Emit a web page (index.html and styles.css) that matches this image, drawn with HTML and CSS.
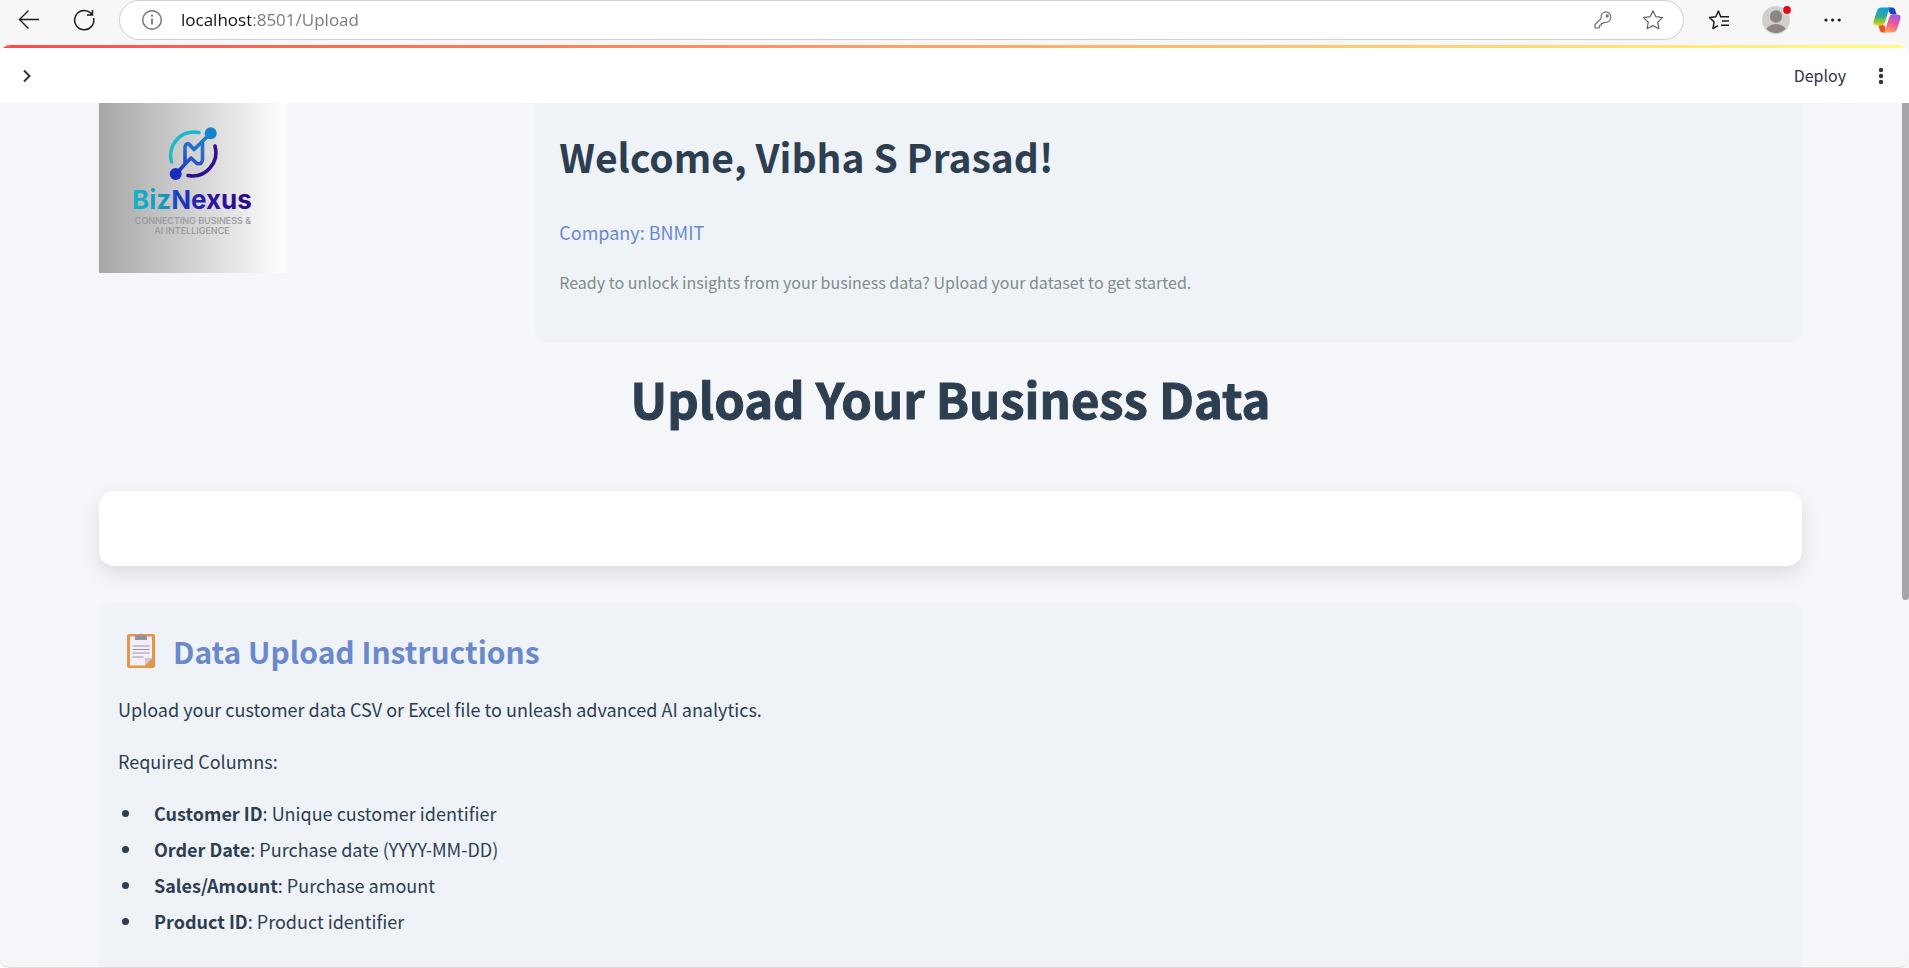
FILE: index.html
```html
<!DOCTYPE html>
<html lang="en">
<head>
<meta charset="utf-8">
<title>Upload</title>
<link rel="stylesheet" href="styles.css">
</head>
<body>
<div class="toolbar">
  <button class="nav-btn" aria-label="Back"><svg width="24" height="24" viewBox="0 0 24 24" fill="none" stroke="#1b1b1b" stroke-width="1.4"><path d="M22 11.500H2.500M11.500 2.500l-9 9 9 9"/></svg></button>
  <button class="nav-btn" aria-label="Reload"><svg width="24" height="24" viewBox="0 0 24 24" fill="none" stroke="#1b1b1b" stroke-width="1.500"><path d="M21.600 10A9.600 9.600 0 1 1 18.500 4.900L20.500 6.800M20.500 2v5h-5.500"/></svg></button>
  <form class="address">
    <svg width="22" height="22" viewBox="0 0 22 22" fill="none" stroke="#717171" stroke-width="1.400"><circle cx="11" cy="11" r="9.300"/><path d="M11 9.500v6" stroke-width="1.700"/><circle cx="11" cy="6.700" r="1.100" fill="#717171" stroke="none"/></svg>
    <input class="address-input" type="text" aria-label="Address" value="localhost:8501/Upload">
    <button type="button" class="plain-btn" aria-label="Passwords"><svg width="20" height="20" viewBox="0 0 20 20" fill="none" stroke="#666" stroke-width="1.100" stroke-linejoin="round"><path d="M12.400 1.700a5.400 5.400 0 1 1-1.400 10.600l-1.200 1.200H8.300v1.700H6.600v1.900l-1 .9H2v-3.500l6.200-6.200A5.400 5.400 0 0 1 12.400 1.700z"/><circle cx="14.200" cy="5.900" r="1"/></svg></button>
    <button type="button" class="plain-btn" aria-label="Add to favorites"><svg width="22" height="22" viewBox="0 0 22 22" fill="none" stroke="#666" stroke-width="1.200" stroke-linejoin="round"><path d="M11 1.700l2.900 6 6.600.9-4.800 4.600 1.200 6.500L11 16.600l-5.900 3.100 1.200-6.500L1.500 8.600l6.600-.9z"/></svg></button>
  </form>
  <div class="actions">
    <button class="action" aria-label="Favorites"><svg width="22" height="22" viewBox="0 0 22 22" fill="none" stroke="#1b1b1b" stroke-width="1.500" stroke-linejoin="round"><path d="M12 7.700h9M12.800 7.700L10.400 2 7.800 7.700 1.500 8.500l4.600 4.400L5 19.500l5-2.800M14 12h7M13 16.300h8"/></svg></button>
    <button class="action" aria-label="Profile"><svg width="32" height="32" viewBox="0 0 32 32"><defs><clipPath id="face"><circle cx="17" cy="16" r="13"/></clipPath></defs><circle cx="17" cy="16" r="14" fill="#d2d0ce"/><g fill="#8b8785"><circle cx="17" cy="12.500" r="6.200"/><ellipse cx="17" cy="28" rx="10.500" ry="8" clip-path="url(#face)"/></g><circle cx="28" cy="6" r="4.800" fill="#f7f7f7"/><circle cx="28" cy="6" r="3.900" fill="#e00b1c"/></svg></button>
    <button class="action" aria-label="Settings and more"><svg width="22" height="22" viewBox="0 0 22 22" fill="#1b1b1b"><circle cx="6" cy="11" r="1.600"/><circle cx="12.600" cy="11" r="1.600"/><circle cx="19.200" cy="11" r="1.600"/></svg></button>
    <button class="action" aria-label="Copilot"><svg width="28" height="28" viewBox="0 0 28 28"><defs><linearGradient id="cpA" x1="0" y1="0" x2="0" y2="1"><stop offset="0" stop-color="#1496f0"/><stop offset=".5" stop-color="#2fb08a"/><stop offset="1" stop-color="#f2d500"/></linearGradient><linearGradient id="cpB" x1=".7" y1="0" x2=".3" y2="1"><stop offset="0" stop-color="#a552e8"/><stop offset=".5" stop-color="#ee5c92"/><stop offset="1" stop-color="#ffa45c"/></linearGradient></defs><path d="M15 1.500h4.500c2 0 2.600 2 3.200 4l.9 3h-4c-2 0-3-1-3.600-3z" fill="#1748c8"/><path d="M13 26.500H9.500c-2 0-2.700-2-3.200-4l-.8-3.500h4c2 0 2.500 1.500 3 3z" fill="#ee5030"/><path d="M8.500 1.500h10c-2 0-2.500 2-3 3.500l-3.500 11c-.8 2.500-1.800 3.500-4.500 3.500H4c-3 0-4.200-2-3.300-5L4 5C4.800 2.500 6 1.500 8.500 1.500z" fill="url(#cpA)"/><path d="M19.500 26.500h-10c2 0 2.500-2 3-3.500l3.500-11c.8-2.500 1.800-3.500 4.500-3.500H24c3 0 4.200 2 3.300 5L24 23c-.8 2.500-2 3.500-4.500 3.500z" fill="url(#cpB)"/></svg></button>
  </div>
</div>
<div class="page">
  <header class="app-header">
    <button class="plain-btn" aria-label="Open sidebar"><svg width="12" height="16" viewBox="0 0 12 16" fill="none" stroke="#31333f" stroke-width="2"><path d="M3 2.500L8.500 8 3 13.500"/></svg></button>
    <div class="app-actions">
      <button class="plain-btn deploy">Deploy</button>
      <button class="plain-btn" aria-label="Menu"><svg width="8" height="20" viewBox="0 0 8 20" fill="#31333f"><circle cx="4" cy="4" r="2.200"/><circle cx="4" cy="10" r="2.200"/><circle cx="4" cy="16" r="2.200"/></svg></button>
    </div>
  </header>
  <main class="content">
    <section class="hero">
      <svg class="logo" width="188" height="170" viewBox="0 0 188 170" role="img" aria-label="BizNexus">
        <defs>
          <linearGradient id="bg"><stop offset="0" stop-color="#a6a6a6"/><stop offset=".5" stop-color="#d2d2d2"/><stop offset="1" stop-color="#fff"/></linearGradient>
          <linearGradient id="mark" gradientUnits="userSpaceOnUse" x1="102" y1="28" x2="84" y2="74"><stop offset="0" stop-color="#1485cb"/><stop offset=".5" stop-color="#2b62c8"/><stop offset="1" stop-color="#1a2cc0"/></linearGradient>
          <linearGradient id="cyan" x1="1" y1="0" x2="0" y2="1"><stop offset="0" stop-color="#13bcd0"/><stop offset="1" stop-color="#2bb7c4"/></linearGradient>
          <linearGradient id="name" gradientUnits="userSpaceOnUse" x1="35" y1="0" x2="152" y2="0"><stop offset="0" stop-color="#12b4c6"/><stop offset=".3" stop-color="#1691ba"/><stop offset=".36" stop-color="#1a3fc4"/><stop offset=".65" stop-color="#2a16a0"/><stop offset="1" stop-color="#2c0a86"/></linearGradient>
        </defs>
        <rect width="188" height="170" fill="url(#bg)"/>
        <g fill="none" stroke-linecap="round" stroke-linejoin="round" stroke-width="3.600">
          <path d="M100 29.500A23.500 23.500 0 0 0 72.500 59" stroke="url(#cyan)"/>
          <path d="M116 43A23.500 23.500 0 0 1 89 72.500" stroke="#2e1192"/>
          <path d="M77 71L86 61V45Q86 40 90 41L95 46.500L112 30M86 61L92 55L98 60.500Q103.500 62 103.500 56V40" stroke="url(#mark)"/>
        </g>
        <circle cx="111.700" cy="30.300" r="6" fill="#1485cb"/><circle cx="76.700" cy="71" r="6" fill="#1a2cc0"/>
        <text x="93" y="106" class="logo-name" fill="url(#name)">BizNexus</text>
        <text x="94" y="121" class="logo-tag">CONNECTING BUSINESS &amp;</text>
        <text x="93" y="131" class="logo-tag">AI INTELLIGENCE</text>
      </svg>
      <div class="welcome">
        <h2 class="welcome-title">Welcome, Vibha S Prasad!</h2>
        <p class="company">Company: BNMIT</p>
        <p class="ready">Ready to unlock insights from your business data? Upload your dataset to get started.</p>
      </div>
    </section>
    <h1 class="page-title">Upload Your Business Data</h1>
    <div class="panel"></div>
    <section class="instructions">
      <h3 class="instructions-title"><svg width="44" height="40" viewBox="0 0 44 40"><rect x="9" y="3" width="28" height="34" rx="2" fill="#e19747"/><path d="M12 5.500h22V27l-7 7.500H12z" fill="#f3eef8"/><path d="M27 34.500V27h7z" fill="#cdc4d6"/><path d="M17 9V6q0-2 2-2h2a2.200 2.200 0 0 1 4 0h2q2 0 2 2v3z" fill="#998f99"/><circle cx="23" cy="4.200" r="1" fill="#e19747"/><path d="M14.500 15h17M14.500 18.500h17M14.500 22h17M14.500 26h11" stroke="#9b93a3" stroke-width="1.200"/></svg>Data Upload Instructions</h3>
      <p class="para">Upload your customer data CSV or Excel file to unleash advanced AI analytics.</p>
      <p class="para">Required Columns:</p>
      <ul class="columns">
        <li><strong>Customer ID</strong>: Unique customer identifier</li>
        <li><strong>Order Date</strong>: Purchase date (YYYY-MM-DD)</li>
        <li><strong>Sales/Amount</strong>: Purchase amount</li>
        <li><strong>Product ID</strong>: Product identifier</li>
      </ul>
    </section>
    <div class="scroll-thumb"></div>
  </main>
</div>
</body>
</html>
```
FILE: styles.css
```css
* { box-sizing: border-box; }
body {
  margin: 0;
  height: 100vh;
  display: flex;
  flex-direction: column;
  overflow: hidden;
  background: #f7f7f7;
  color: #2c3e50;
  font-family: "Noto Sans CJK JP", "Noto Sans", sans-serif;
}
button { border: 0; padding: 0; background: none; font: inherit; color: inherit; }
svg { display: block; flex: none; }
h1, h2, h3, p, ul { margin: 0; }

.toolbar { display: flex; align-items: flex-start; height: 45px; padding: 0 6px 0 1px; flex: none; }
.nav-btn { width: 55px; height: 40px; display: grid; place-items: center; }
.address {
  flex: 1;
  height: 40px;
  margin: 0 19px 0 8px;
  padding: 0 19px 0 21px;
  display: flex;
  align-items: center;
  gap: 18px;
  border: 1px solid #cfcfcf;
  border-radius: 20px;
  background: #fff;
}
.address-input {
  flex: 1;
  min-width: 0;
  border: 0;
  padding: 0;
  outline: 0;
  font: 17px/24px "Open Sans", sans-serif;
  color: transparent;
  background: linear-gradient(90deg, #111 70px, #777 70px);
  -webkit-background-clip: text;
  background-clip: text;
}
.plain-btn { display: grid; place-items: center; }
.address .plain-btn + .plain-btn { margin-left: 11px; }
.actions { display: flex; gap: 24px; }
.action { width: 32px; height: 40px; display: grid; place-items: center; }

.page {
  flex: 1;
  min-height: 0;
  display: flex;
  flex-direction: column;
  overflow: hidden;
  border-bottom: 1px solid #dcdcdc;
  border-radius: 10px;
  background: #f4f6fa;
}
.app-header {
  flex: none;
  height: 58px;
  padding: 3px 24px 0 21px;
  display: flex;
  align-items: center;
  justify-content: space-between;
  background: linear-gradient(90deg, #ff4b4b, #fffd80) top / 100% 3px no-repeat #fff;
}
.app-actions { display: flex; align-items: center; gap: 31px; }
.deploy { padding-bottom: 2px; font-size: 16px; line-height: 24px; color: #31333f; }

.content { position: relative; flex: 1; min-height: 0; overflow: hidden; padding: 0 107px 0 99px; }
.scroll-thumb {
  position: absolute;
  top: 0;
  right: 0;
  width: 7px;
  height: 57.5%;
  border-radius: 0 0 4px 4px;
  background: #a6a6aa;
}
.hero { display: grid; grid-template-columns: 1fr 3fr; gap: 14px; }
.welcome { padding: 21px 24px 49px; border-radius: 0 0 12px 12px; background: #eff3f8; }
.welcome-title { font-size: 39px; line-height: 64px; font-weight: 600; }
.company { margin-top: 30px; font-size: 18px; line-height: 28px; color: #6a89cc; }
.ready { margin-top: 24px; font-size: 16px; line-height: 24px; color: #7f8c8d; }
.page-title {
  margin-top: 19px;
  text-align: center;
  font-size: 49px;
  line-height: 72px;
  font-weight: 700;
  -webkit-text-stroke: 1px #2c3e50;
}
.panel { height: 75px; margin-top: 57px; border-radius: 15px; background: #fff; box-shadow: 0 8px 20px rgba(0, 0, 0, .1); }
.instructions { margin-top: 37px; height: 500px; padding: 24px 19px; border-radius: 10px; background: #eff3f8; }
.instructions-title { display: flex; align-items: center; gap: 11px; font-size: 30px; line-height: 48px; font-weight: 600; color: #6a89cc; }
.para { margin-top: 24px; font-size: 18px; line-height: 28px; }
.instructions-title + .para { margin-top: 20px; }
.columns { margin-top: 20px; padding: 0; list-style: none; font-size: 18px; line-height: 36px; }
.columns li { display: flex; align-items: center; white-space: pre; }
.columns li::before { content: ""; width: 7px; height: 7px; margin: 0 25px 0 4px; border-radius: 50%; background: #2c3e50; }
.columns strong { font-weight: 600; }

.logo-name { font: 700 26px Inter, sans-serif; text-anchor: middle; }
.logo-tag { font: 500 9px Inter, sans-serif; text-anchor: middle; fill: #98989e; }
```
